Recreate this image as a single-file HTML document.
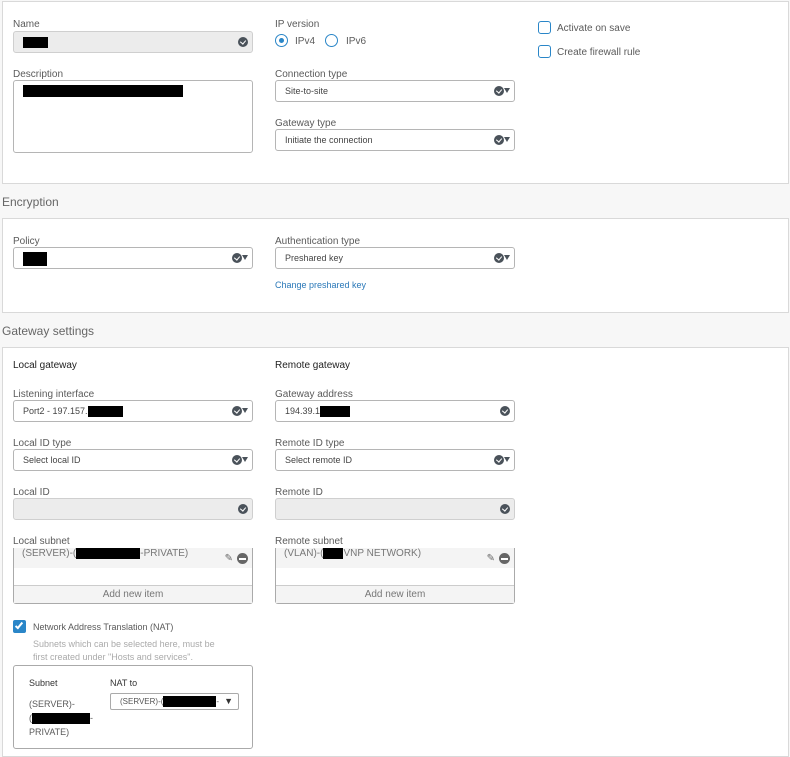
<!DOCTYPE html>
<html><head><style>
*{box-sizing:border-box;margin:0;padding:0}
body{width:790px;height:753px;background:#f7f7f7;font-family:"Liberation Sans",sans-serif;position:relative;overflow:hidden;color:#444}
.a{position:absolute}
.panel{position:absolute;background:#fff;border:1px solid #d9d9d9;left:2px;width:787px}
.lbl{position:absolute;font-size:10px;color:#5a5a5a;margin-top:1px}
.in{position:absolute;height:22px;border:1px solid #b5b5b5;border-radius:3px;background:#fff;font-size:9px;color:#444;padding:0 9px;line-height:21px}
.gr{background:#ececec;border-color:#cfcfcf}
.red{display:inline-block;background:#000;height:11px;vertical-align:middle}
.ck{position:absolute;right:4px;top:5px;width:10px;height:10px;border-radius:50%;background:#4a525a}
.ck:after{content:"";position:absolute;left:3px;top:2px;width:3px;height:4px;border:solid #fff;border-width:0 1.5px 1.5px 0;transform:rotate(40deg)}
.sel{position:absolute;right:4px;top:5px;width:16px;height:10px}
.sel i{position:absolute;left:0;top:0;width:10px;height:10px;border-radius:50%;background:#4a525a}
.sel i:after{content:"";position:absolute;left:3px;top:2px;width:3px;height:4px;border:solid #fff;border-width:0 1.5px 1.5px 0;transform:rotate(40deg)}
.sel b{position:absolute;left:10px;top:2px;border-left:3px solid transparent;border-right:3px solid transparent;border-top:5px solid #4a525a}
.h{position:absolute;left:2px;font-size:12px;color:#666}
.cb{position:absolute;width:13px;height:13px;border:1.5px solid #2a86c8;border-radius:3px}
</style></head><body>

<div class="panel" style="top:1px;height:183px"></div>
<div class="lbl" style="left:13px;top:18px">Name</div>
<div class="in gr" style="left:13px;top:31px;width:240px"><span class="red" style="width:25px"></span><div class="ck"></div></div>
<div class="lbl" style="left:13px;top:68px">Description</div>
<div class="in" style="left:13px;top:80px;width:240px;height:73px;padding-top:4px;line-height:11px"><span class="red" style="width:160px;height:12px"></span></div>
<div class="lbl" style="left:275px;top:18px">IP version</div>
<div class="a" style="left:275px;top:34px;width:13px;height:13px;border:1.5px solid #2a86c8;border-radius:50%"><div class="a" style="left:3px;top:3px;width:5px;height:5px;border-radius:50%;background:#2a86c8"></div></div>
<div class="lbl" style="left:295px;top:35px">IPv4</div>
<div class="a" style="left:325px;top:34px;width:13px;height:13px;border:1.5px solid #2a86c8;border-radius:50%"></div>
<div class="lbl" style="left:346px;top:35px">IPv6</div>
<div class="lbl" style="left:275px;top:68px">Connection type</div>
<div class="in" style="left:275px;top:80px;width:240px">Site-to-site<div class="sel"><i></i><b></b></div></div>
<div class="lbl" style="left:275px;top:117px">Gateway type</div>
<div class="in" style="left:275px;top:129px;width:240px">Initiate the connection<div class="sel"><i></i><b></b></div></div>
<div class="cb" style="left:538px;top:21px"></div><div class="lbl" style="left:557px;top:22px">Activate on save</div>
<div class="cb" style="left:538px;top:45px"></div><div class="lbl" style="left:557px;top:46px">Create firewall rule</div>

<div class="h" style="top:195px">Encryption</div>
<div class="panel" style="top:218px;height:95px"></div>
<div class="lbl" style="left:13px;top:235px">Policy</div>
<div class="in" style="left:13px;top:247px;width:240px"><span class="red" style="width:24px;height:14px"></span><div class="sel"><i></i><b></b></div></div>
<div class="lbl" style="left:275px;top:235px">Authentication type</div>
<div class="in" style="left:275px;top:247px;width:240px">Preshared key<div class="sel"><i></i><b></b></div></div>
<div class="lbl" style="left:275px;top:279px;color:#2a78b8;font-size:9px">Change preshared key</div>

<div class="h" style="top:324px">Gateway settings</div>
<div class="panel" style="top:347px;height:410px"></div>
<div class="lbl" style="left:13px;top:359px;color:#222">Local gateway</div>
<div class="lbl" style="left:275px;top:359px;color:#222">Remote gateway</div>
<div class="lbl" style="left:13px;top:388px">Listening interface</div>
<div class="in" style="left:13px;top:400px;width:240px">Port2 - 197.157.<span class="red" style="width:35px"></span><div class="sel"><i></i><b></b></div></div>
<div class="lbl" style="left:275px;top:388px">Gateway address</div>
<div class="in" style="left:275px;top:400px;width:240px">194.39.1<span class="red" style="width:30px"></span><div class="ck"></div></div>
<div class="lbl" style="left:13px;top:437px">Local ID type</div>
<div class="in" style="left:13px;top:449px;width:240px">Select local ID<div class="sel"><i></i><b></b></div></div>
<div class="lbl" style="left:275px;top:437px">Remote ID type</div>
<div class="in" style="left:275px;top:449px;width:240px">Select remote ID<div class="sel"><i></i><b></b></div></div>
<div class="lbl" style="left:13px;top:486px">Local ID</div>
<div class="in gr" style="left:13px;top:498px;width:240px"><div class="ck"></div></div>
<div class="lbl" style="left:275px;top:486px">Remote ID</div>
<div class="in gr" style="left:275px;top:498px;width:240px"><div class="ck"></div></div>

<div class="lbl" style="left:13px;top:535px">Local subnet</div>
<div class="a" style="left:13px;top:548px;width:240px;height:56px;border:1px solid #aaa;border-top:none;border-radius:0 0 3px 3px;background:#fff">
<div class="a" style="left:0;top:0;width:238px;height:20px;background:#f4f4f4;font-size:10px;color:#777;padding-left:8px">(SERVER)-(<span class="red" style="width:64px;vertical-align:top"></span>-PRIVATE)</div>
<div class="a" style="right:19px;top:5px;font-size:10px;color:#666">✎</div><div class="a" style="right:4px;top:5px;width:11px;height:11px;border-radius:50%;background:#666"><div class="a" style="left:2px;top:4.5px;width:7px;height:2px;background:#fff"></div></div>
<div class="a" style="left:0;top:37px;width:238px;height:18px;border-top:1px solid #ccc;background:#f4f4f4;font-size:10px;color:#777;text-align:center;line-height:18px">Add new item</div></div>
<div class="lbl" style="left:275px;top:535px">Remote subnet</div>
<div class="a" style="left:275px;top:548px;width:240px;height:56px;border:1px solid #aaa;border-top:none;border-radius:0 0 3px 3px;background:#fff">
<div class="a" style="left:0;top:0;width:238px;height:20px;background:#f4f4f4;font-size:10px;color:#777;padding-left:8px">(VLAN)-(<span class="red" style="width:20px;vertical-align:top"></span>VNP NETWORK)</div>
<div class="a" style="right:19px;top:5px;font-size:10px;color:#666">✎</div><div class="a" style="right:4px;top:5px;width:11px;height:11px;border-radius:50%;background:#666"><div class="a" style="left:2px;top:4.5px;width:7px;height:2px;background:#fff"></div></div>
<div class="a" style="left:0;top:37px;width:238px;height:18px;border-top:1px solid #ccc;background:#f4f4f4;font-size:10px;color:#777;text-align:center;line-height:18px">Add new item</div></div>

<div class="a" style="left:13px;top:620px;width:13px;height:13px;background:#2a86c8;border-radius:2px"><div class="a" style="left:4px;top:1px;width:4px;height:8px;border:solid #fff;border-width:0 2px 2px 0;transform:rotate(40deg)"></div></div>
<div class="lbl" style="left:33px;top:621px;font-size:9px">Network Address Translation (NAT)</div>
<div class="lbl" style="left:33px;top:637px;font-size:9px;color:#aaa;line-height:13px">Subnets which can be selected here, must be<br>first created under "Hosts and services".</div>
<div class="a" style="left:13px;top:665px;width:240px;height:84px;border:1px solid #aaa;border-radius:3px"></div>
<div class="lbl" style="left:29px;top:677px;font-size:9px;color:#333">Subnet</div>
<div class="lbl" style="left:110px;top:677px;font-size:9px;color:#333">NAT to</div>
<div class="lbl" style="left:29px;top:696px;font-size:9px;line-height:14px">(SERVER)-<br>(<span class="red" style="width:58px"></span>-<br>PRIVATE)</div>
<div class="a" style="left:110px;top:693px;width:129px;height:17px;border:1px solid #aaa;border-radius:2px;font-size:8px;padding-left:9px;line-height:15px;color:#555">(SERVER)-(<span class="red" style="width:53px"></span>- <span style="position:absolute;right:5px;font-size:9px;color:#333">▼</span></div>
</body></html>
